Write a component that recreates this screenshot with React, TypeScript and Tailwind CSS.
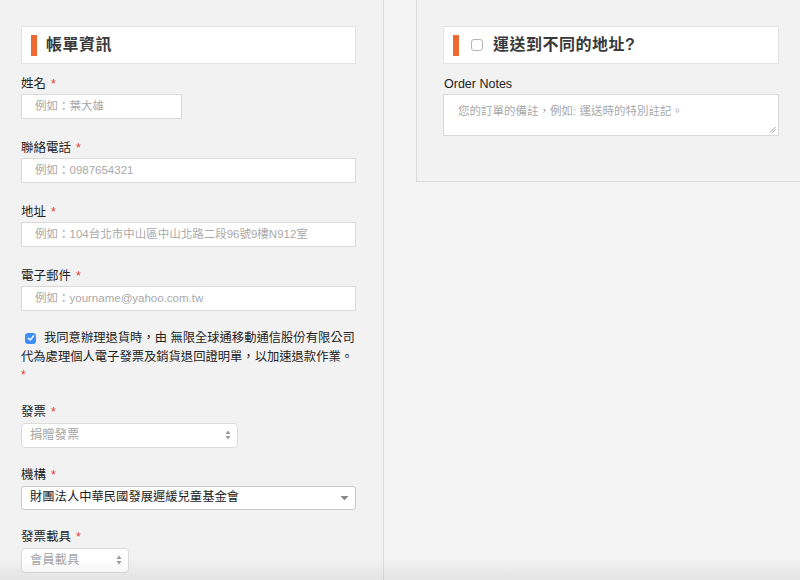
import React from "react";

const FONT = { fontFamily: '"Liberation Sans", "Noto Sans CJK TC", sans-serif' };

function Star() {
  return <span className="ml-[5px] text-[#e23b3b]">*</span>;
}

function Label({ text }: { text: string }) {
  return (
    <div className="h-[22px] pt-[2px] flex items-center text-[12.5px] text-[#222]">
      {text}
      <Star />
    </div>
  );
}

function TextInput({ placeholder, w }: { placeholder: string; w: string }) {
  return (
    <div
      className={`${w} h-[25px] bg-white border border-[#d9d9d9] flex items-center pl-[13px] text-[11.5px] text-[#a9a9a9]`}
    >
      {placeholder}
    </div>
  );
}

function UpDown() {
  return (
    <svg width="6" height="10" viewBox="0 0 6 10" className="text-[#9a9a9a]">
      <path d="M3 0.5 L5.5 4 L0.5 4 Z" fill="currentColor" />
      <path d="M3 9.5 L5.5 6 L0.5 6 Z" fill="currentColor" />
    </svg>
  );
}

function Header({ children }: { children: React.ReactNode }) {
  return (
    <div className="h-[38px] bg-white border border-[#e2e2e2] flex items-center pl-[9px]">
      <span className="w-[6px] h-[21px] bg-[#ee6a30] mr-[9px]" />
      {children}
    </div>
  );
}

export default function App() {
  return (
    <div className="relative w-[800px] h-[580px] overflow-hidden bg-[#f2f2f2] flex" style={FONT}>
      {/* left column */}
      <div className="w-[384px] shrink-0 border-r border-[#dedede] pl-[21px] pr-[27px] pt-[26px]">
        <Header>
          <span className="text-[16px] font-semibold text-[#3a3a3a] tracking-[0.5px]">帳單資訊</span>
        </Header>

        <div className="mt-[8px]">
          <Label text="姓名" />
          <TextInput placeholder="例如：葉大雄" w="w-[161px]" />
        </div>

        <div className="mt-[17px]">
          <Label text="聯絡電話" />
          <TextInput placeholder="例如：0987654321" w="w-full" />
        </div>

        <div className="mt-[17px]">
          <Label text="地址" />
          <TextInput placeholder="例如：104台北市中山區中山北路二段96號9樓N912室" w="w-full" />
        </div>

        <div className="mt-[17px]">
          <Label text="電子郵件" />
          <TextInput placeholder="例如：yourname@yahoo.com.tw" w="w-full" />
        </div>

        <div className="mt-[18px] text-[12.3px] leading-[18.5px] text-[#222]">
          <div className="flex items-center">
            <span className="ml-[4px] mr-[8px] w-[11px] h-[11px] rounded-[3px] bg-[#3d8ff5] flex items-center justify-center">
              <svg width="8" height="8" viewBox="0 0 8 8">
                <path d="M1.3 4.2 L3.2 6 L6.7 1.8" fill="none" stroke="white" strokeWidth="1.4" strokeLinecap="round" strokeLinejoin="round" />
              </svg>
            </span>
            <span>我同意辦理退貨時，由 無限全球通移動通信股份有限公司</span>
          </div>
          <div className="whitespace-nowrap">代為處理個人電子發票及銷貨退回證明單，以加速退款作業。</div>
          <div className="text-[#e23b3b]">*</div>
        </div>

        <div className="mt-[16px]">
          <Label text="發票" />
          <div className="w-[217px] h-[25px] bg-white border border-[#dcdcdc] rounded-[4px] flex items-center justify-between pl-[8px] pr-[6px] text-[12.3px] text-[#a5a5a5]">
            <span>捐贈發票</span>
            <UpDown />
          </div>
        </div>

        <div className="mt-[16px]">
          <Label text="機構" />
          <div className="w-full h-[24px] bg-white border border-[#c9c9c9] rounded-[3px] flex items-center justify-between pl-[8px] pr-[6px] text-[12.3px] text-[#222]">
            <span>財團法人中華民國發展遲緩兒童基金會</span>
            <svg width="9" height="6" viewBox="0 0 9 6">
              <path d="M0.5 1 L8.5 1 L4.5 5.5 Z" fill="#888" />
            </svg>
          </div>
        </div>

        <div className="mt-[16px]">
          <Label text="發票載具" />
          <div className="w-[108px] h-[25px] bg-white border border-[#dcdcdc] rounded-[4px] flex items-center justify-between pl-[8px] pr-[6px] text-[12.3px] text-[#a5a5a5]">
            <span>會員載具</span>
            <UpDown />
          </div>
        </div>
      </div>

      {/* right column */}
      <div className="flex-1 bg-[#f3f3f3] pl-[32px]">
        <div className="border-l border-b border-[#dcdcdc] bg-[#f2f2f2] pl-[26px] pr-[21px] pt-[26px] pb-[45px]">
          <Header>
            <span className="ml-[3px] mr-[10px] w-[12px] h-[12px] rounded-[3px] border border-[#b5b5b5] bg-white" />
            <span className="text-[16px] font-semibold text-[#3a3a3a] tracking-[0.5px]">運送到不同的地址?</span>
          </Header>
          <div className="mt-[8px] h-[22px] pt-[2px] flex items-center text-[12.5px] text-[#222] pl-[1px]">Order Notes</div>
          <div className="relative h-[42px] bg-white border border-[#d9d9d9] pl-[14px] pt-[8px] text-[11.5px] text-[#a9a9a9]">
            您的訂單的備註，例如: 運送時的特別註記。
            <svg width="7" height="7" viewBox="0 0 7 7" className="absolute right-[2px] bottom-[2px]">
              <path d="M1 6.5 L6.5 1 M3.5 6.5 L6.5 3.5" stroke="#999" strokeWidth="0.9" />
            </svg>
          </div>
        </div>
      </div>

      {/* bottom shade */}
      <div className="pointer-events-none absolute left-0 right-0 bottom-0 h-[22px] bg-gradient-to-b from-transparent to-black/[0.06]" />
    </div>
  );
}
